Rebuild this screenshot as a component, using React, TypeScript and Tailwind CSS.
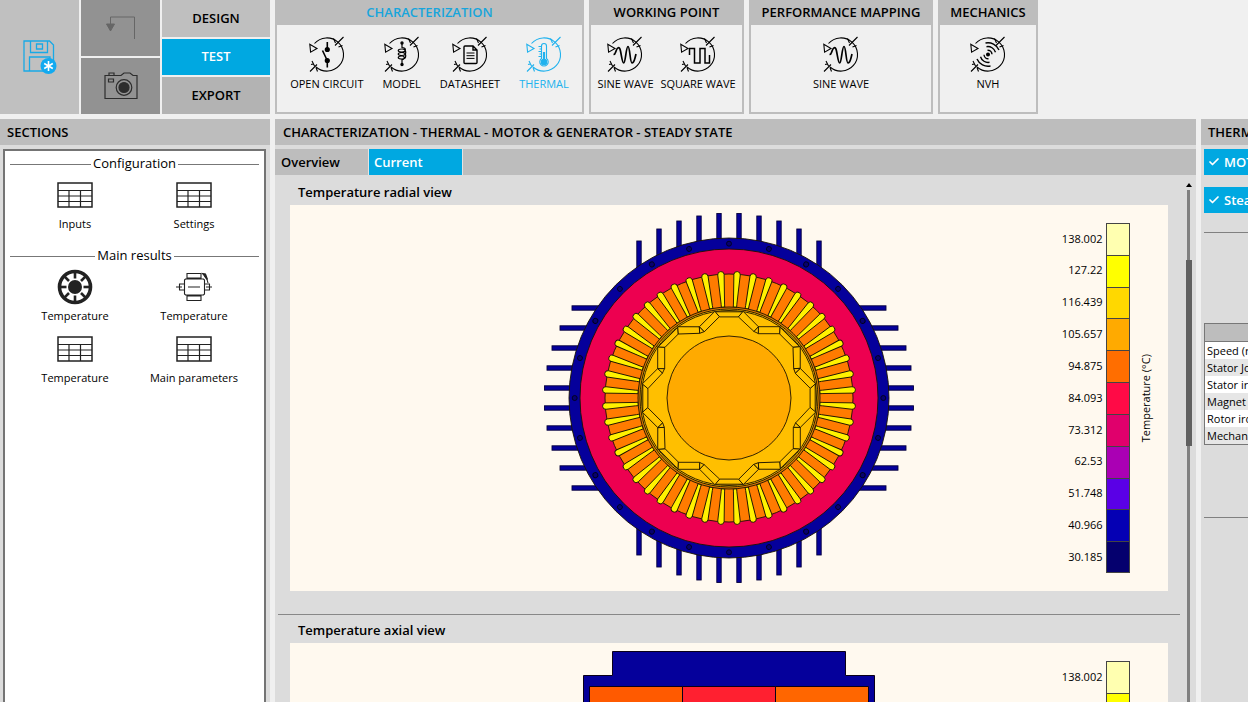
import React from "react";
import { Check } from "lucide-react";

type IconKind = "switch" | "coil" | "sheet" | "thermo" | "sine" | "square" | "waves";

const glyphs: Record<IconKind, React.ReactNode> = {
  switch: (
    <g strokeWidth="1.6">
      <path d="M18.3 6v7M18.3 25v6.5M18 24 13.5 14.5" />
      <circle cx="18.3" cy="13.5" r="1.8" fill="currentColor" />
      <circle cx="18.3" cy="24.5" r="1.8" fill="currentColor" />
    </g>
  ),
  coil: (
    <g strokeWidth="1.2">
      <circle cx="18" cy="7" r="1.1" fill="currentColor" />
      <circle cx="18" cy="28.5" r="1.1" fill="currentColor" />
      <path d="M18 7v4.5c4.5 0 4.5 4.5 0 4.5-5 0-5-3 0-3 5 0 5 6.5 0 6.5-5 0-5-3 0-3 5 0 5 6.5 0 6.5-5 0-5-3 0-3 3 0 3 3 0 4v4.5" />
    </g>
  ),
  sheet: (
    <g strokeWidth="1.4">
      <path d="M13 10h8l4 4v12.5q0 1-1 1H13q-1 0-1-1V11q0-1 1-1zM21 10v4h4" />
      <path d="M14.5 17h8M14.5 19.7h8M14.5 22.4h8" strokeWidth="1" />
    </g>
  ),
  thermo: (
    <g strokeWidth="1.1">
      <path d="M15.5 22.5V10a2.5 2.5 0 0 1 5 0v12.5a4.2 4.2 0 1 1-5 0z" />
      <circle cx="18" cy="26" r="2.7" fill="currentColor" />
      <path d="M18 25V16" strokeWidth="2.2" />
      <path d="M12.5 10.5h3M13.5 13h2M12.5 15.5h3M13.5 18h2M12.5 20.5h3" />
    </g>
  ),
  sine: (
    <path
      d="M6.5 18.5q1.5 0 2.2-2.5c1.5-5 3.8-6 4.8-1 1.4 7 1.8 12 3.2 12 1.9 0 2.3-16.5 4.3-16.5s2 16.5 4 16.5c1.6 0 2.2-2 3-5l1-4"
      strokeWidth="1.7"
    />
  ),
  square: <path d="M9.5 19v-6.5h5v14.5h5.5V12.5h5v14.5h4.5v-8" strokeWidth="1.5" />,
  waves: (
    <g strokeWidth="1.4">
      <circle cx="18" cy="18.5" r="1.3" fill="currentColor" />
      <path d="M17.5 14.2a4.3 4.3 0 0 1 4.5 4M16.5 10.7a8 8 0 0 1 9 5.5M15.5 7a12 12 0 0 1 13.5 7" />
      <path d="M18.5 22.8a4.3 4.3 0 0 1-4.5-4M19.5 26.3a8 8 0 0 1-9-5.5M20.5 30a12 12 0 0 1-13.5-7" />
    </g>
  ),
};

function CycleIcon({ kind }: { kind: IconKind }) {
  return (
    <svg viewBox="0 0 36 37" className="h-[37px] w-9" fill="none" stroke="currentColor" strokeWidth="1.1" aria-hidden="true">
      <path d="M5.5 7.5A16.6 16.6 0 1 1 7 31" />
      <path d="M.8 8.2 1.6 16.2 8 12.4z" />
      <path d="M34.5 1 26 9.5M24.5 2.5l2 4.5M33.5 9.5l-4 1.5" />
      <path d="M1 35.5 8 28.5M3 25l2.5 5M7 31.5l1.5 4M2 28.5l2-.5" />
      {glyphs[kind]}
    </svg>
  );
}

const groups: { title: string; active?: boolean; width: string; gap: string; items: { label: string; kind: IconKind; active?: boolean }[] }[] = [
  {
    title: "CHARACTERIZATION",
    active: true,
    width: "w-[309px]",
    gap: "gap-[19px]",
    items: [
      { label: "OPEN CIRCUIT", kind: "switch" },
      { label: "MODEL", kind: "coil" },
      { label: "DATASHEET", kind: "sheet" },
      { label: "THERMAL", kind: "thermo", active: true },
    ],
  },
  {
    title: "WORKING POINT",
    width: "w-[155px]",
    gap: "gap-[7px]",
    items: [
      { label: "SINE WAVE", kind: "sine" },
      { label: "SQUARE WAVE", kind: "square" },
    ],
  },
  { title: "PERFORMANCE MAPPING", width: "w-[184px]", gap: "gap-2", items: [{ label: "SINE WAVE", kind: "sine" }] },
  { title: "MECHANICS", width: "w-[100px]", gap: "gap-2", items: [{ label: "NVH", kind: "waves" }] },
];

function Ribbon() {
  return (
    <header className="flex h-[114px] shrink-0 gap-[5px]">
      <div className="flex w-[270px] shrink-0 gap-0.5">
        <button aria-label="Save" className="flex w-[79px] items-center justify-center bg-[#c0c0c0] text-[#18a9e6]">
          <svg viewBox="0 0 34 34" className="size-[34px]" fill="none" stroke="currentColor" strokeWidth="1.3" aria-hidden="true">
            <path d="M1 1h25.5l4 4v26H1zM7.5 1v11.5h17V1M13.5 4h6v5h-6zM6.5 31V17H27v3" />
            <circle cx="25.5" cy="26" r="8" fill="#12aaf0" stroke="none" />
            <path d="M25.5 21v10M21.2 23.5l8.6 5M29.8 23.5l-8.6 5" stroke="#fff" strokeWidth="1.6" />
          </svg>
        </button>
        <div className="flex w-[79px] flex-col gap-0.5">
          <button aria-label="Undo" className="flex flex-1 items-center justify-center bg-[#929292] text-[#666]">
            <svg viewBox="0 0 30 24" className="h-6 w-[30px]" fill="none" stroke="currentColor" aria-hidden="true">
              <path d="M28.5 23V1H4.5v8" />
              <path d="M.5 8h8l-4 7z" fill="currentColor" />
            </svg>
          </button>
          <button aria-label="Snapshot" className="flex flex-1 items-center justify-center bg-[#929292] text-[#2d2d2d]">
            <svg viewBox="0 0 34 28" className="h-7 w-[34px]" fill="none" stroke="currentColor" strokeWidth="1.2" aria-hidden="true">
              <path d="M1 3.5h16l3-2.5h6l3 2.5h4v23H1zM5 3.5V1h5v2.5M4.5 7h5v3h-5z" />
              <circle cx="20" cy="15.5" r="7.8" />
              <circle cx="20" cy="15.5" r="5" fill="currentColor" />
            </svg>
          </button>
        </div>
        <nav className="flex flex-1 flex-col gap-0.5 text-[13px] font-semibold">
          <button className="flex-1 bg-[#bfbfbf]">DESIGN</button>
          <button className="flex-1 bg-[#00a8e1] text-white">TEST</button>
          <button className="flex-1 bg-[#b3b3b3]">EXPORT</button>
        </nav>
      </div>
      {groups.map((g) => (
        <section key={g.title} className={`flex shrink-0 flex-col border-2 border-t-0 border-[#bdbdbd] ${g.width}`}>
          <h2 className={`h-[25px] bg-[#bdbdbd] text-center text-[13px] leading-[25px] font-semibold whitespace-nowrap ${g.active ? "text-[#18a5dc]" : ""}`}>
            {g.title}
          </h2>
          <div className={`flex flex-1 items-start justify-center pt-[11px] ${g.gap}`}>
            {g.items.map((it) => (
              <button key={it.label} className={`flex flex-col items-center text-[11px] leading-[21px] whitespace-nowrap ${it.active ? "text-[#21b2ee]" : "text-black"}`}>
                <CycleIcon kind={it.kind} />
                {it.label}
              </button>
            ))}
          </div>
        </section>
      ))}
    </header>
  );
}

function TableIcon() {
  return (
    <svg viewBox="0 0 36 26" className="h-[26px] w-9" fill="none" stroke="#222" strokeWidth="1.2" aria-hidden="true">
      <rect x="1" y="1" width="34" height="24" strokeWidth="1.5" />
      <path d="M1 8.5h34M1 14h34M1 19.5h34M12 8.5V25M23.5 8.5V25" />
    </svg>
  );
}

function RotorIcon() {
  return (
    <svg viewBox="0 0 36 36" className="size-9" fill="none" stroke="#222" aria-hidden="true">
      <circle cx="18" cy="18" r="15.5" strokeWidth="3.6" />
      <circle cx="18" cy="18" r="7" fill="#222" stroke="none" />
      {[0, 45, 90, 135, 180, 225, 270, 315].map((a) => (
        <path key={a} d="M18 3v6.5" strokeWidth="2.6" transform={`rotate(${a} 18 18)`} />
      ))}
    </svg>
  );
}

function AxialIcon() {
  return (
    <svg viewBox="0 0 36 30" className="h-[30px] w-9" fill="none" stroke="#222" strokeWidth="1.1" aria-hidden="true">
      <path d="M11 1.5h14v4.5H11zM11 24h14v4.5H11zM8.5 8l1-1h18l1 1v14l-1 1h-18l-1-1zM3.5 12h5v6h-5zM28.5 12h5v6h-5z" />
      <path d="M0 15h6M12 15h12M30 15h6" />
      <path d="M28.5 4c1.5 1.5 3 4 3.5 7" />
      <path d="M26.5 1.5l3 .5 2 5.5z" fill="#222" />
    </svg>
  );
}

const sections = [
  { title: "Configuration", items: [["Inputs", "table"], ["Settings", "table"]] },
  { title: "Main results", items: [["Temperature", "rotor"], ["Temperature", "axial"], ["Temperature", "table"], ["Main parameters", "table"]] },
];

function Sidebar() {
  return (
    <aside className="flex w-[270px] shrink-0 flex-col bg-[#dcdcdc]">
      <h2 className="h-[26px] shrink-0 bg-[#bdbdbd] px-[7px] text-[13px] leading-[26px] font-semibold">SECTIONS</h2>
      <div className="mt-1 mr-1 ml-[3px] flex-1 border-2 border-b-0 border-[#747474] bg-white px-[5px]">
        {sections.map((s) => (
          <section key={s.title} className="mb-1">
            <h3 className="flex h-[26px] items-center gap-0.5 text-[13px] text-black">
              <span className="h-px flex-1 bg-[#777]" />
              {s.title}
              <span className="h-px flex-1 bg-[#777]" />
            </h3>
            <div className="mx-auto grid w-[238px] grid-cols-2">
              {s.items.map(([label, icon], i) => (
                <button key={i} className="flex h-[62px] flex-col items-center text-[11px] leading-[22px] whitespace-nowrap text-black">
                  <span className="flex h-9 items-center">
                    {icon === "table" ? <TableIcon /> : icon === "rotor" ? <RotorIcon /> : <AxialIcon />}
                  </span>
                  {label}
                </button>
              ))}
            </div>
          </section>
        ))}
      </div>
    </aside>
  );
}

const finTips = [
  [10, 184.5],
  [30, 182],
  [50, 177],
  [70, 169],
  [90, 157],
];
const steps = (n: number) => Array.from({ length: n }, (_, i) => i);

function RadialView() {
  return (
    <svg viewBox="-185 -185 370 370" className="size-[370px]" stroke="#1b1300" strokeWidth="0.9" aria-label="Temperature radial view" role="img">
      <g fill="#05009b" stroke="#05003c">
        {[0, 90, 180, 270].map((a) => (
          <g key={a} transform={`rotate(${a})`}>
            {finTips.flatMap(([x, t]) => [-x, x].map((p) => <rect key={p} x={p - 2.2} y={-t} width="4.4" height={t - 100} />))}
          </g>
        ))}
      </g>
      <circle r="160" fill="#05009b" />
      {steps(24).map((i) => (
        <circle key={i} cy="-154.3" r="2.5" fill="#070070" stroke="#02001c" transform={`rotate(${i * 15})`} />
      ))}
      <circle r="149" fill="#ed0050" />
      <circle r="124" fill="#ff7b00" />
      {steps(48).map((i) => (
        <path key={i} d="M-1.7 -91V-94L-3.2 -123.5A3.2 3.2 0 0 1 3.2 -123.5L1.7 -94V-91Z" fill="#fff200" transform={`rotate(${i * 7.5 + 3.75})`} />
      ))}
      <circle r="91" fill="#d97a00" />
      <circle r="89" fill="#ffbf00" />
      <circle r="87.5" fill="#ffbf00" />
      {steps(8).map((i) => (
        <g key={i} transform={`rotate(${i * 45})`} fill="#ffc400">
          <path d="M-14 -86.2H14L9.4 -81.1H-9.4Z" />
          <path d="M29.4 -71.3H51.3L50.7 -64.3H29.3Z" />
          <path d="M29.4 -71.3L14.1 -86.7L9.4 -81.1L25 -66.5Z" />
          <path d="M29.4 -71.3L25 -66.5L29.3 -64.5Z" />
        </g>
      ))}
      <circle r="62" fill="#ffaa00" />
    </svg>
  );
}

function AxialView() {
  return (
    <svg viewBox="0 0 292 370" className="h-[370px] w-[292px]" stroke="#0a0018" strokeWidth="1" aria-label="Temperature axial view" role="img">
      <path d="M29.5 .5h233v24h29V369.5H.5V24.5h29z" fill="#05009b" />
      <path d="M6.5 35.5h93v334h-93z" fill="#ff5a00" />
      <path d="M99.5 35.5h93v334h-93z" fill="#ff2030" />
      <path d="M192.5 35.5h93v334h-93z" fill="#ff6600" />
    </svg>
  );
}

const scale: [string, string][] = [
  ["138.002", "bg-[#ffffb0]"],
  ["127.22", "bg-[#ffff00]"],
  ["116.439", "bg-[#ffd800]"],
  ["105.657", "bg-[#ffaa00]"],
  ["94.875", "bg-[#ff6e00]"],
  ["84.093", "bg-[#ff0a46]"],
  ["73.312", "bg-[#e0006c]"],
  ["62.53", "bg-[#aa00b4]"],
  ["51.748", "bg-[#5a00e6]"],
  ["40.966", "bg-[#0500b4]"],
  ["30.185", "bg-[#05006e]"],
];

function Plot({ title, children }: { title: string; children: React.ReactNode }) {
  return (
    <section className="pl-[12px]">
      <h3 className="h-[29px] pl-2 text-[13px] leading-[32px] font-semibold">{title}</h3>
      <div className="mr-[12px] grid h-[386px] grid-cols-[1fr_auto_1fr] items-center bg-[#fff9ef]">
        <span />
        {children}
        <div className="mr-[14px] flex items-center justify-end text-[11px] text-black">
          <ol className="flex h-[350px] flex-col">
            {scale.map(([v, c]) => (
              <li key={v} className="group flex flex-1 items-center justify-end gap-[3px]">
                {v}
                <span className={`h-full w-6 border border-b-0 border-[#444] group-last:border-b ${c}`} />
              </li>
            ))}
          </ol>
          <span className="ml-2 rotate-180 whitespace-nowrap [writing-mode:vertical-rl]">Temperature (°C)</span>
        </div>
      </div>
    </section>
  );
}

function Workspace() {
  return (
    <main className="flex min-w-0 flex-1 flex-col bg-[#dcdcdc]">
      <h1 className="h-[26px] shrink-0 bg-[#bdbdbd] px-2 text-[13px] leading-[26px] font-semibold whitespace-nowrap">
        CHARACTERIZATION - THERMAL - MOTOR &amp; GENERATOR - STEADY STATE
      </h1>
      <div className="mt-1 flex h-[26px] shrink-0 gap-px bg-[#bdbdbd] text-[13px] leading-[26px] font-semibold">
        <button className="w-[92px] px-1.5 text-left">Overview</button>
        <button className="w-[95px] border-x border-[#e4e4e4] bg-[#00a8e1] px-[5px] text-left text-white">Current</button>
      </div>
      <div className="flex min-h-0 flex-1">
        <div className="min-w-0 flex-1 overflow-hidden pt-px pl-[3px]">
          <Plot title="Temperature radial view">
            <RadialView />
          </Plot>
          <hr className="mt-[23px] mb-[-1px] border-[#888]" />
          <Plot title="Temperature axial view">
            <AxialView />
          </Plot>
        </div>
        <div className="flex w-4 flex-col items-center pt-2 pl-px">
          <svg viewBox="0 0 6 4" className="h-1 w-1.5 shrink-0" aria-hidden="true">
            <path d="M0 4 3 0l3 4z" />
          </svg>
          <div className="mt-[3px] flex w-1.5 flex-1 flex-col items-center">
            <span className="h-[70px] w-[3px] bg-[#808080]" />
            <span className="h-[186px] w-1.5 bg-[#606060]" />
            <span className="w-[3px] flex-1 bg-[#808080]" />
          </div>
        </div>
      </div>
    </main>
  );
}

const rows = ["Speed (rpm)", "Stator Joule", "Stator iron", "Magnet", "Rotor iron", "Mechanical"];

function Inspector() {
  return (
    <aside className="w-[47px] shrink-0 overflow-hidden bg-[#dcdcdc] whitespace-nowrap">
      <h2 className="h-[26px] bg-[#bdbdbd] pl-[7px] text-[13px] leading-[26px] font-semibold">THERMAL</h2>
      <div className="mt-1 ml-[3px] flex flex-col gap-3 text-[13px] leading-[26px] font-semibold text-white">
        {["MOTOR", "Steady state"].map((t) => (
          <button key={t} className="flex h-[26px] items-center gap-1 overflow-hidden bg-[#00a8e1] pl-1">
            <Check className="size-3 shrink-0" strokeWidth={3.5} aria-hidden="true" />
            {t}
          </button>
        ))}
      </div>
      <hr className="mt-[19px] ml-[3px] border-[#808080]" />
      <table className="mt-[90px] ml-[3px] w-[280px] border border-[#777] text-[11px] leading-[17px] text-black">
        <thead>
          <tr>
            <th aria-label="Quantity" className="h-[18px] border-b border-[#777] bg-[#bdbdbd] p-0" />
          </tr>
        </thead>
        <tbody>
          {rows.map((r) => (
            <tr key={r} className="bg-white even:bg-[#e6e6e6]">
              <td className="py-0 pr-0 pl-0.5">{r}</td>
            </tr>
          ))}
        </tbody>
      </table>
      <hr className="mt-[72px] ml-[3px] border-[#808080]" />
    </aside>
  );
}

export default function App() {
  return (
    <div className="flex h-screen flex-col gap-[5px] overflow-hidden bg-[#f0f0f0] font-['Open_Sans',sans-serif] text-black">
      <Ribbon />
      <div className="flex min-h-0 flex-1 gap-[5px]">
        <Sidebar />
        <Workspace />
        <Inspector />
      </div>
    </div>
  );
}
